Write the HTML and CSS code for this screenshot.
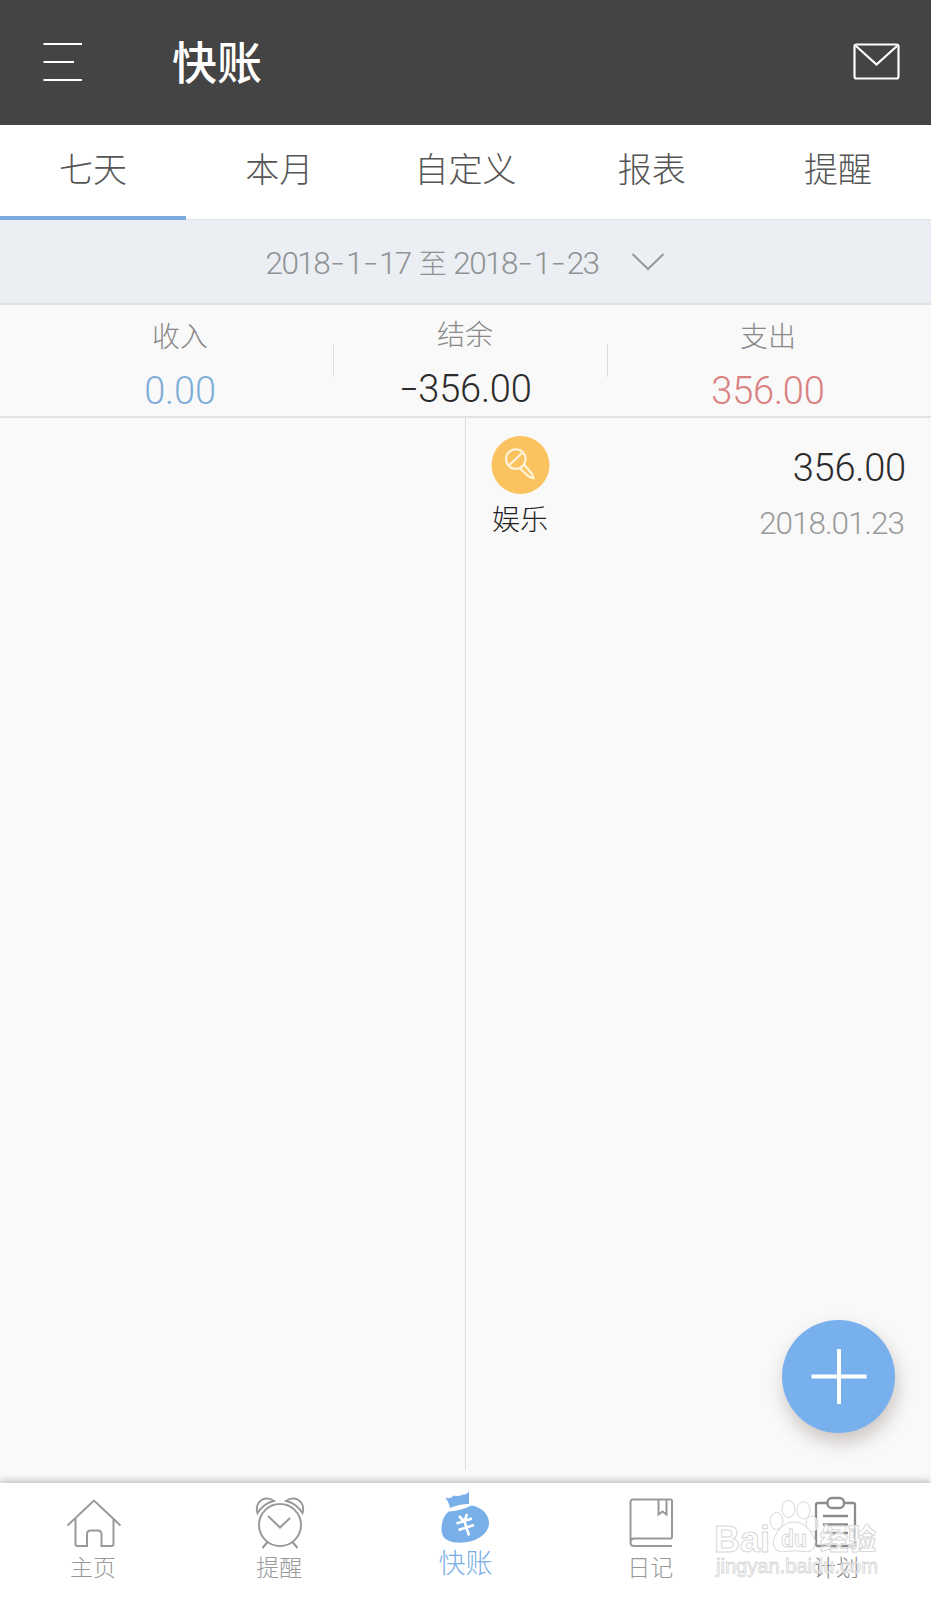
FILE: index.html
```html
<!DOCTYPE html>
<html lang="zh-CN">
<head>
<meta charset="utf-8">
<title>快账</title>
<link rel="stylesheet" href="styles.css">
</head>
<body>
<div class="app">
  <header class="topbar">
    <svg class="menu-icon" width="40" height="40" viewBox="0 0 40 40"><path d="M.5 2H39M.5 20H31M.5 38H39"/></svg>
    <h1 class="title">快账</h1>
    <svg class="mail-icon" width="48" height="38" viewBox="0 0 48 38"><rect x="1.5" y="1.5" width="44" height="34" rx="2"/><path d="M3 3 23.5 21.5 44 3"/></svg>
  </header>
  <nav class="tabs">
    <a class="tab active">七天</a><a class="tab">本月</a><a class="tab">自定义</a><a class="tab">报表</a><a class="tab">提醒</a>
  </nav>
  <div class="range">
    <span class="range-text">2018<span class="dash">-</span>1<span class="dash">-</span>17 <span class="to">至</span> 2018<span class="dash">-</span>1<span class="dash">-</span>23</span>
    <svg class="chevron" width="34" height="20" viewBox="0 0 34 20"><path d="M1.5 2 17 17 32.5 2"/></svg>
  </div>
  <section class="summary">
    <div class="stat income"><span class="label">收入</span><span class="amount">0.00</span></div>
    <div class="stat balance"><span class="label">结余</span><span class="amount"><span class="dash">-</span>356.00</span></div>
    <div class="stat expense"><span class="label">支出</span><span class="amount">356.00</span></div>
  </section>
  <main class="ledger">
    <div class="column"></div>
    <div class="column entries">
      <div class="entry">
        <div class="category">
          <svg class="category-icon" width="59" height="59" viewBox="0 0 59 59"><circle class="disc" cx="29.5" cy="29" r="29"/><circle cx="24.8" cy="23" r="9.8"/><path d="M18.500 29 31 17M29.500 33 38.500 41 42.300 42 41.300 38.200 33.500 29"/></svg>
          <span class="category-name">娱乐</span>
        </div>
        <div class="details"><span class="amount">356.00</span><span class="date">2018.01.23</span></div>
      </div>
    </div>
    <button class="add" aria-label="+"><svg width="56" height="56" viewBox="0 0 56 56"><path d="M.5 27.500H55.5M28 0V55"/></svg></button>
  </main>
  <nav class="bottom">
    <a class="item">
      <svg width="60" height="54" viewBox="0 0 60 54"><path d="M3.5 29.5 30 4.500 56.500 29.500M11.500 23V48Q11.500 50 13.500 50H23V38Q23 34.500 26.500 34.500H33.500Q37.500 34.500 37.500 38V50H47.500Q49.500 50 49.500 48V23"/></svg><span>主页</span></a>
    <a class="item">
      <svg width="60" height="54" viewBox="0 0 60 54"><circle cx="30" cy="29" r="21"/><path d="M18 20 30 31.500 40 22M17.500 46 12.500 52M42.500 46 47.500 52M7.500 17C5 9 10 2.500 17 2.500Q21 2.500 24 5Q14 7 7.500 17ZM52.500 17C55 9 50 2.500 43 2.500Q39 2.500 36 5Q46 7 52.500 17Z"/></svg><span>提醒</span></a>
    <a class="item active">
      <svg width="60" height="54" viewBox="0 0 60 54"><path class="fill" d="M10 7.500Q15 9.500 19 5.500Q25 7 27 4.500Q31 5.500 34 1.500V14Q24 14 15 18Q14 12 10 7.500ZM13.500 21.500Q25 21 36.500 15.500C47 17 54.500 25 54 34C53 45 39 54 21 52.500C10 51.500 6 46 6.500 38Q7 27 13.500 21.500Z"/><path class="yen" d="M24 26 29.500 31.500 32 24M21.500 33.500 37 28.500M23.500 40 39 35M29.500 31.500 34 45.500"/></svg><span>快账</span></a>
    <a class="item diary">
      <svg width="60" height="54" viewBox="0 0 60 54"><path d="M51 42.500V5Q51 3.500 49.500 3.500H12Q9.500 3.500 9.500 6V46.500Q9.500 50 13 50H51M51 42.500H13.500Q9.500 42.500 9.500 46.500M37.500 4V18.500L41.500 15.500 45.500 18.500V4"/></svg><span>日记</span></a>
    <a class="item plan">
      <svg width="60" height="54" viewBox="0 0 60 54"><path d="M21.500 7H12Q10 7 10 9V48Q10 50 12 50H47Q49 50 49 48V9Q49 7 47 7H38M17 20H42M17 28.500H42M17 37H42"/><rect x="21.500" y="2" width="16.500" height="10" rx="4.500"/></svg><span>计划</span></a>
    <svg class="watermark" width="168" height="100" viewBox="0 0 168 100">
      <g class="paw"><ellipse cx="62.500" cy="33" rx="6.500" ry="8.500"/><ellipse cx="74.500" cy="21" rx="6.500" ry="8.500"/><ellipse cx="89.500" cy="22.300" rx="6.500" ry="8.500"/><ellipse cx="98" cy="36" rx="6" ry="8"/><path d="M80 34C69 34 61 45 59.500 53C58.500 61 64 65 71 63.500Q81 62 90 63.500C98 65 102 59 101 52C98 44 91 34 80 34Z"/></g>
      <text class="brand" x="0" y="64" textLength="56" lengthAdjust="spacingAndGlyphs">Bai</text>
      <text class="du" x="67" y="59" textLength="26" lengthAdjust="spacingAndGlyphs">du</text>
      <text class="cn" x="106" y="62" textLength="56" lengthAdjust="spacingAndGlyphs">经验</text>
      <text class="url" x="2" y="85" textLength="162" lengthAdjust="spacingAndGlyphs">jingyan.baidu.com</text>
    </svg>
  </nav>
</div>
</body>
</html>
```
FILE: styles.css
```css
* { box-sizing: border-box; }
body { margin: 0; font-family: "Noto Sans CJK SC", sans-serif; font-weight: 300; }
svg { fill: none; display: block; }
.app { width: 931px; height: 1600px; display: flex; flex-direction: column; background: #f9f9f9; overflow: hidden; }
.topbar { height: 125px; background: #444; display: flex; align-items: center; padding: 0 30px 2px 43px; flex: none; }
.menu-icon, .mail-icon { stroke: #fff; stroke-width: 2.2; }
.mail-icon { margin: 0 0 0 auto; }
.title { margin: -2px 0 0 89px; font-size: 45px; line-height: 60px; font-weight: 500; color: #fff; }
.tabs { display: grid; grid-template-columns: repeat(5, 1fr); height: 95px; background: #fff; flex: none; border-bottom: 1px solid #e2e4e8; }
.tab { text-align: center; font-size: 34px; line-height: 86px; color: #555; height: 95px; }
.tab.active { border-bottom: 4px solid #7aace0; }
.range { height: 85px; background: #ebeef2; border-bottom: 2px solid #dfe1e3; display: flex; justify-content: center; align-items: center; gap: 33px; flex: none; color: #8f9294; }
.range-text { font: 300 31.5px/40px Roboto, "Noto Sans CJK SC", sans-serif; letter-spacing: -1.6px; white-space: nowrap; padding-top: 5px; }
.dash { display: inline-block; width: 17px; text-align: center; font: 200 36px/30px Inter, sans-serif; letter-spacing: 0; transform: translateY(3px); font-feature-settings: "case"; }
.to { font: 300 28px/30px "Noto Sans CJK SC", sans-serif; margin: 0 2px; }
.chevron { stroke: #999; stroke-width: 2; }
.summary { height: 113px; display: grid; grid-template-columns: 334px 274px 1fr; border-bottom: 2px solid #e2e2e2; flex: none; }
.stat { display: flex; flex-direction: column; align-items: center; position: relative; padding: 10px 0 0 26px; }
.balance { padding: 8px 12px 0 0; }
.expense { padding-left: 0; padding-right: 3px; }
.stat:not(:last-child)::after { content: ""; position: absolute; right: 0; top: 39px; width: 1px; height: 33px; background: #ddd; }
.label { font-size: 28px; line-height: 40px; color: #888; }
.amount { font: 300 38px/54px Roboto, sans-serif; letter-spacing: -.2px; color: #2b2b2b; margin-top: 9px; white-space: nowrap; }
.amount .dash { width: 20px; font-size: 48px; transform: translateY(4px); }
.income .amount { color: #7faed8; }
.expense .amount { color: #d98080; }
.ledger { flex: 1; display: grid; grid-template-columns: 465px 1fr; position: relative; }
.entries { border-left: 1px solid #ddd; height: 1052px; }
.entry { display: flex; justify-content: space-between; padding: 18px 25px 0 25px; }
.category-icon { stroke: #fff4dc; stroke-width: 2.1; }
.disc { fill: #fbc35f; stroke: none; }
.category-name { display: block; font-size: 28px; line-height: 40px; margin: 3px 0 0 1px; color: #222; }
.details { display: flex; flex-direction: column; align-items: flex-end; }
.details .amount { margin-top: 5px; }
.date { font: 300 31.5px/40px Roboto, sans-serif; letter-spacing: -1px; color: #999; margin: 9px 2px 0 0; }
.add { position: absolute; right: 36px; bottom: 50px; width: 113px; height: 113px; border: 0; border-radius: 50%; background: #78b0ed; display: grid; place-items: center; box-shadow: 2px 9px 18px rgba(80,60,50,.28); padding: 0; }
.add svg { stroke: #fff; stroke-width: 4; }
.bottom { height: 117px; background: #fff; display: grid; grid-template-columns: repeat(5, 1fr); position: relative; flex: none; box-shadow: 0 -2px 7px rgba(0,0,0,.25); }
.item { display: flex; flex-direction: column; align-items: center; padding-top: 13px; color: #999; font-size: 23px; line-height: 32px; }
.item svg { stroke: #999; stroke-width: 2; margin-left: 1px; }
.item.active { padding-top: 7px; color: #78aee4; font-size: 27px; line-height: 35px; }
.item.active svg { margin-left: 0; }
.item.active .fill { fill: #78afe9; stroke: none; }
.item.active .yen { stroke: #fff; stroke-width: 2.6; }
.diary { padding-right: 3px; }
.plan { padding-right: 4px; color: #888; }
.plan svg:first-child { stroke: #8c8c8c; stroke-width: 2.3; }
.watermark { position: absolute; left: 714px; top: 5px; }
.watermark text, .paw { fill: rgba(255,255,255,.7); stroke: #d8d8d8; stroke-width: 1; }
.brand { font: 700 37px "Liberation Sans", sans-serif; }
.watermark .du { font: 700 24px "Liberation Sans", sans-serif; }
.cn { font: 900 29px "Noto Sans CJK SC", sans-serif; }
.watermark .url { font: 400 20px "Liberation Sans", sans-serif; stroke-width: .9; }
```
